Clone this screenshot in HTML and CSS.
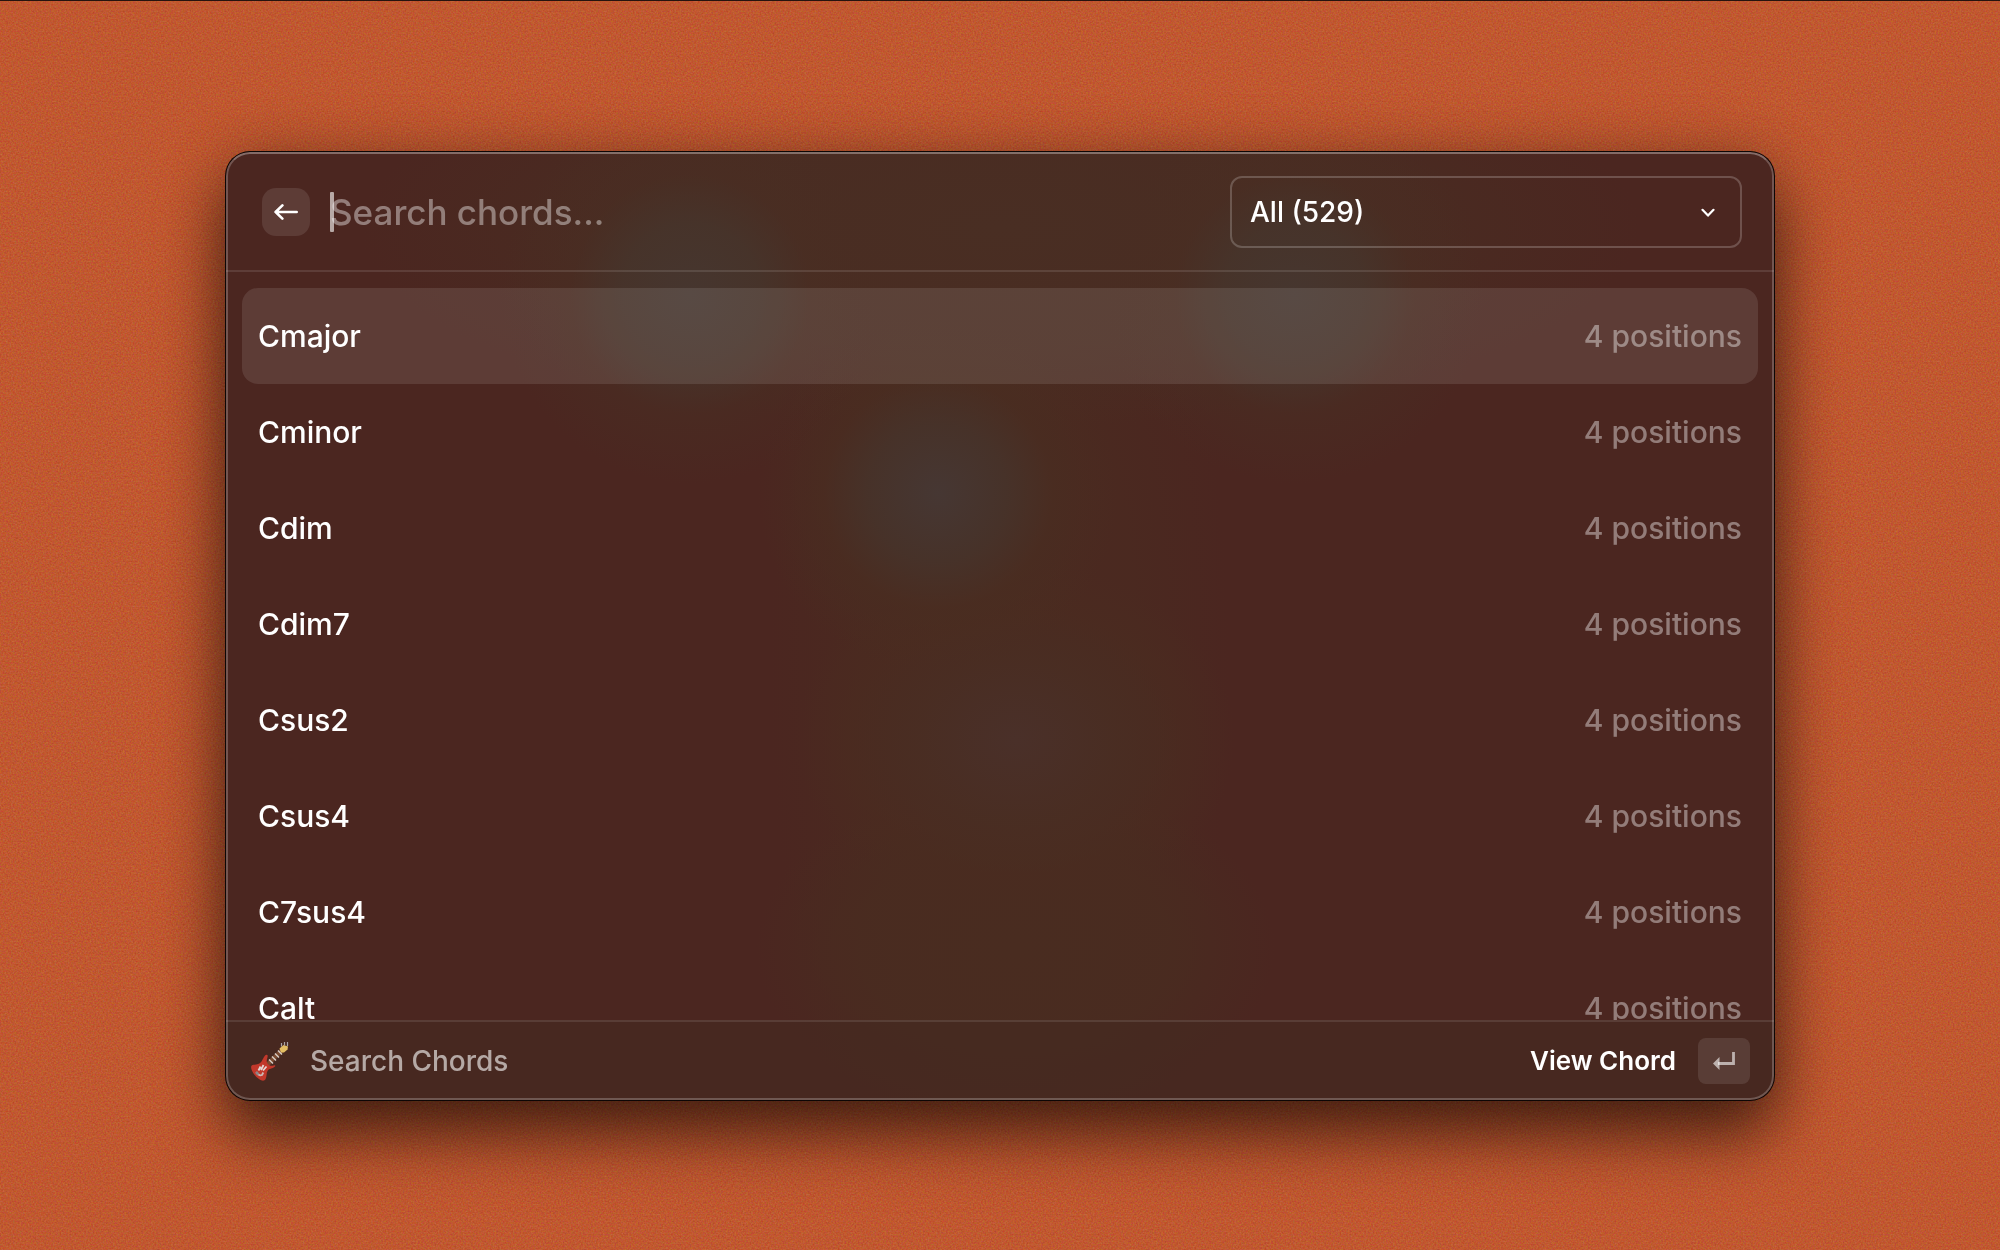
FILE: index.html
```html
<!DOCTYPE html>
<html lang="en">
<head>
<meta charset="utf-8">
<meta name="viewport" content="width=device-width, initial-scale=1">
<title>Search Chords</title>
<link rel="stylesheet" href="styles.css">
</head>
<body>
<svg class="grain" aria-hidden="true">
  <filter id="grain" x="0" y="0" width="100%" height="100%" color-interpolation-filters="sRGB">
    <feTurbulence type="fractalNoise" baseFrequency="0.6" numOctaves="2" seed="4"/>
    <feComponentTransfer><feFuncA type="linear" slope="0" intercept="1"/></feComponentTransfer>
  </filter>
  <rect width="100%" height="100%" filter="url(#grain)"/>
</svg>
<main class="window">
  <header class="header">
    <button class="back" type="button" aria-label="Back">
      <svg width="24" height="16" viewBox="0 0 24 16" fill="none" stroke="currentColor" stroke-width="2.6" stroke-linecap="round" stroke-linejoin="round"><path d="M22.7 8H1.6M8.4 1.4 1.6 8l6.8 6.6"/></svg>
    </button>
    <div class="search">
      <input class="search-input" type="text" placeholder="Search chords..." aria-label="Search chords">
      <span class="caret"></span>
    </div>
    <div class="filter">
      <select class="filter-select" aria-label="Filter chords"><option>All (529)</option></select>
      <svg class="chevron" width="14" height="10" viewBox="0 0 14 10" fill="none" stroke="currentColor" stroke-width="2.2" stroke-linecap="round" stroke-linejoin="round"><path d="M1.5 1.8 7 7.6l5.500-5.800"/></svg>
    </div>
  </header>
  <ul class="list">
    <li><button class="item selected" type="button"><span>Cmajor</span><span class="meta">4 positions</span></button></li>
    <li><button class="item" type="button"><span>Cminor</span><span class="meta">4 positions</span></button></li>
    <li><button class="item" type="button"><span>Cdim</span><span class="meta">4 positions</span></button></li>
    <li><button class="item" type="button"><span>Cdim7</span><span class="meta">4 positions</span></button></li>
    <li><button class="item" type="button"><span>Csus2</span><span class="meta">4 positions</span></button></li>
    <li><button class="item" type="button"><span>Csus4</span><span class="meta">4 positions</span></button></li>
    <li><button class="item" type="button"><span>C7sus4</span><span class="meta">4 positions</span></button></li>
    <li><button class="item" type="button"><span>Calt</span><span class="meta">4 positions</span></button></li>
  </ul>
  <footer class="footer">
    <svg class="guitar" width="40" height="40" viewBox="0 0 40 40" aria-hidden="true">
      <path d="M16 22 30 8l3 3L19 25z" fill="#7a4a30"/>
      <path d="m19 18.500 4 4M22 15.500l4 4M25 12.500l4 4M28 9.500l4 4" stroke="#d9cfc8" stroke-width="1.400"/>
      <path d="M29.500 7.500 33.500 4l4.500 1.500-.5 3L34 11.500h-3z" fill="#e3bd62"/>
      <path d="M31.500 2v3.500M34.500 1v3.500M37.500 1v4" stroke="#a9a3a5" stroke-width="1.200"/>
      <path d="M16.800 13.700c1.500.4.800 2.200.3 4-.8 2.800-.3 4.300 1.200 5.800 1.600 1.700 3.500 1.500 6.200.7.900-.2 1 .7.400 1.400-1.900 2.200-5.800 1.700-7.400 4.300-1.300 2.200-.5 5.300-1.900 8.200-1.100 2.300-4.200 1.700-6.300.2C5.700 35.800 3.200 32.600 1.700 29c-1.200-3-.6-5.100 1.900-5.300 3.200-.3 5.800-.6 7.700-3 1.600-2.100 3.300-7.500 5.500-7z" fill="#c2382b"/>
      <path d="m13.500 24-2.500 5M10.500 25.500l-2 4M16.500 25.500 13 29.500" stroke="#e5d9d6" stroke-width="1.800"/>
      <path d="M6.500 31c1 2.500 3.200 4 5.500 3l1.300-2.500" stroke="#cbbab6" stroke-width="1.800" fill="none"/>
      <path d="m6 31 2.500 2.500" stroke="#8f8587" stroke-width="2.500"/>
    </svg>
    <span class="title">Search Chords</span>
    <button class="action" type="button">
      <span>View Chord</span>
      <span class="key"><svg width="22" height="18" viewBox="0 0 22 18" fill="none" aria-hidden="true"><path d="M20.500 0v11.500H5" stroke="currentColor" stroke-width="2.800"/><path d="M0 11.500 6.500 5v13z" fill="currentColor"/></svg></span>
    </button>
  </footer>
</main>
</body>
</html>
```
FILE: styles.css
```css
* {
  box-sizing: border-box;
}

body {
  margin: 0;
  height: 100vh;
  padding: 151px 226px 150px;
  border-top: 1px solid #27130e;
  display: flex;
  position: relative;
  overflow: hidden;
  background: #c1582f;
  color: #fff;
  font: 500 30px/40px Inter, "Liberation Sans", sans-serif;
}

.grain {
  position: absolute;
  inset: 0;
  width: 100%;
  height: 100%;
  opacity: 0.5;
  mix-blend-mode: soft-light;
}

button,
input,
select {
  font: inherit;
  color: inherit;
  border: 0;
  margin: 0;
  padding: 0;
  background: none;
}

.window {
  position: relative;
  flex: 1;
  min-width: 0;
  display: flex;
  flex-direction: column;
  border-radius: 24px;
  overflow: hidden;
  background:
    radial-gradient(circle at 30% 15%, #46362f 0, #46352ccc 70px, #492e2388 120px, #4a2c2000 190px),
    radial-gradient(circle at 69% 15%, #46362f 0, #46352ccc 70px, #492e2388 120px, #4a2c2000 190px),
    radial-gradient(circle at 46% 36%, #463733 0, #46342bcc 70px, #492e2199 115px, #4a2c2000 180px),
    radial-gradient(ellipse 220px 180px at 51% 62%, #4a3029 0, #492e23cc 45%, #4a2c2088 75%, #4a2b2000),
    radial-gradient(ellipse 260px 170px at 51% 84%, #492c20 0, #492c20cc 60%, #4a2b2000),
    radial-gradient(ellipse 640px 200px at 50% 8%, #492e23 0, #492d22cc 60%, #4a2b2000),
    radial-gradient(ellipse 230px 620px at 50% 55%, #4a2b2099 60%, #4a2b2000),
    #4b2620;
  box-shadow: 0 0 0 1px #0d0605, 0 36px 64px rgba(0, 0, 0, 0.6), 0 0 60px rgba(0, 0, 0, 0.2);
}

.window::after {
  content: "";
  position: absolute;
  inset: 0;
  border: 2px solid rgba(255, 255, 255, 0.22);
  border-top-color: rgba(255, 255, 255, 0.32);
  border-radius: 24px;
  pointer-events: none;
}

.header {
  flex: none;
  display: flex;
  align-items: center;
  height: 120px;
  padding: 2px 32px 0 36px;
  border-bottom: 2px solid rgba(255, 255, 255, 0.11);
}

.back {
  width: 48px;
  height: 48px;
  display: grid;
  place-items: center;
  border-radius: 14px;
  background: rgba(255, 255, 255, 0.1);
}

.search {
  position: relative;
  flex: 1;
  min-width: 0;
  margin: 0 20px;
}

.search-input {
  display: block;
  width: 100%;
  height: 48px;
  font-size: 35px;
  outline: 0;
  caret-color: transparent;
}

.search-input::placeholder {
  color: rgba(255, 255, 255, 0.4);
  opacity: 1;
}

.caret {
  position: absolute;
  left: 0;
  top: 4px;
  width: 4px;
  height: 40px;
  border-radius: 1px;
  background: rgba(255, 255, 255, 0.6);
}

.filter {
  position: relative;
  flex: 0 1 512px;
}

.filter-select {
  display: block;
  width: 100%;
  height: 72px;
  padding: 0 18px;
  border: 2px solid rgba(255, 255, 255, 0.2);
  border-radius: 12px;
  appearance: none;
  font-size: 28px;
}

.chevron {
  position: absolute;
  right: 27px;
  top: 32px;
  pointer-events: none;
}

.list {
  flex: 1;
  min-height: 0;
  overflow: hidden;
  margin: 0;
  padding: 16px 16px 0;
  list-style: none;
}

.list li {
  display: flex;
}

.item {
  width: 100%;
  height: 96px;
  display: flex;
  align-items: center;
  justify-content: space-between;
  padding: 0 16px;
  border-radius: 16px;
}

.selected {
  background: rgba(255, 255, 255, 0.1);
}

.meta {
  color: rgba(255, 255, 255, 0.4);
}

.footer {
  flex: none;
  display: flex;
  align-items: center;
  height: 80px;
  padding: 0 24px;
  border-top: 2px solid rgba(255, 255, 255, 0.1);
  background: rgba(68, 42, 34, 0.6);
  font-size: 28px;
}

.title {
  margin-left: 20px;
  color: rgba(255, 255, 255, 0.6);
}

.action {
  margin-left: auto;
  display: flex;
  align-items: center;
  gap: 22px;
  font-size: 26px;
  font-weight: 600;
}

.key {
  width: 52px;
  height: 46px;
  display: grid;
  place-items: center;
  border-radius: 8px;
  background: rgba(255, 255, 255, 0.1);
  color: rgba(255, 255, 255, 0.6);
}
```
